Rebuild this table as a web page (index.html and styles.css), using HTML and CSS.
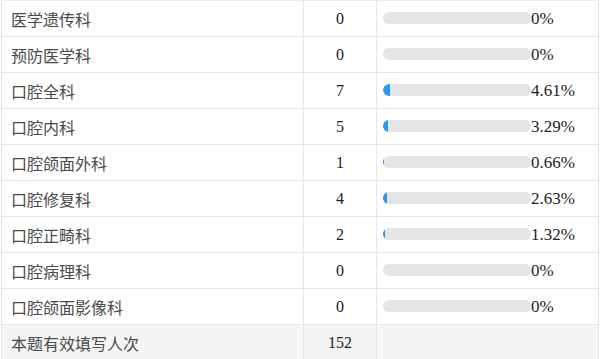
FILE: index.html
```html
<!DOCTYPE html>
<html lang="zh-CN">
<head>
<meta charset="utf-8">
<link rel="stylesheet" href="styles.css">
</head>
<body>
<table class="stat">
  <colgroup><col class="c-name"><col class="c-num"><col class="c-bar"></colgroup>
  <tbody>
    <tr><td class="name">医学遗传科</td><td class="num">0</td><td class="pct"><span class="bar"><span class="fill" style="width:0%"></span></span><span class="val">0%</span></td></tr>
    <tr><td class="name">预防医学科</td><td class="num">0</td><td class="pct"><span class="bar"><span class="fill" style="width:0%"></span></span><span class="val">0%</span></td></tr>
    <tr><td class="name">口腔全科</td><td class="num">7</td><td class="pct"><span class="bar"><span class="fill" style="width:4.61%"></span></span><span class="val">4.61%</span></td></tr>
    <tr><td class="name">口腔内科</td><td class="num">5</td><td class="pct"><span class="bar"><span class="fill" style="width:3.29%"></span></span><span class="val">3.29%</span></td></tr>
    <tr><td class="name">口腔颌面外科</td><td class="num">1</td><td class="pct"><span class="bar"><span class="fill" style="width:0.66%"></span></span><span class="val">0.66%</span></td></tr>
    <tr><td class="name">口腔修复科</td><td class="num">4</td><td class="pct"><span class="bar"><span class="fill" style="width:2.63%"></span></span><span class="val">2.63%</span></td></tr>
    <tr><td class="name">口腔正畸科</td><td class="num">2</td><td class="pct"><span class="bar"><span class="fill" style="width:1.32%"></span></span><span class="val">1.32%</span></td></tr>
    <tr><td class="name">口腔病理科</td><td class="num">0</td><td class="pct"><span class="bar"><span class="fill" style="width:0%"></span></span><span class="val">0%</span></td></tr>
    <tr><td class="name">口腔颌面影像科</td><td class="num">0</td><td class="pct"><span class="bar"><span class="fill" style="width:0%"></span></span><span class="val">0%</span></td></tr>
    <tr class="total"><td class="name">本题有效填写人次</td><td class="num">152</td><td class="pct"></td></tr>
  </tbody>
</table>
</body>
</html>
```

FILE: styles.css
```css
html, body {
  margin: 0;
  padding: 0;
  background: #ffffff;
}
body {
  padding-left: 1px;
  font-family: "Liberation Serif", "Noto Sans CJK SC", serif;
  font-size: 16px;
  line-height: 20px;
  color: #333333;
}
.stat {
  border-collapse: collapse;
  table-layout: fixed;
  width: 597px;
}
.c-name { width: 302px; }
.c-num { width: 73px; }
.c-bar { width: 222px; }
.stat td {
  border: 1px solid #e6e6e6;
  height: 35px;
  padding: 0;
  vertical-align: middle;
}
.stat tr:first-child td {
  border-top: 1px solid #ececec;
}
.name {
  padding-left: 9px !important;
  font-family: "Noto Sans CJK SC", sans-serif;
  font-size: 16px;
  color: #4a4a4a;
}
.num {
  text-align: center;
  color: #222222;
}
.pct {
  padding-left: 6px !important;
  white-space: nowrap;
  color: #222222;
}
.bar {
  display: inline-block;
  vertical-align: middle;
  width: 148px;
  height: 12px;
  border-radius: 6px;
  background: #e4e5e7;
  overflow: hidden;
  position: relative;
  top: -1px;
}
.fill {
  display: block;
  height: 100%;
  background: #2b96f3;
  border-radius: 6px 0 0 6px;
}
.val {
  vertical-align: middle;
  font-size: 17px;
}
.total td {
  background: #f5f5f5;
}
```
